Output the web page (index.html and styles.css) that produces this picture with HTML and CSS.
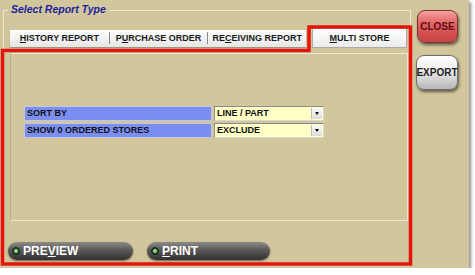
FILE: index.html
```html
<!DOCTYPE html>
<html lang="en">
<head>
    <meta charset="UTF-8">
    <title>Select Report Type</title>
    <link rel="stylesheet" href="styles.css">
</head>
<body>
    <div class="window">
        <div class="main">
            <div class="legend">Select Report Type</div>

            <div class="tabs">
                <div class="tabstrip">
                    <span class="tab"><u>H</u>ISTORY REPORT</span>
                    <span class="tab sep">P<u>U</u>RCHASE ORDER</span>
                    <span class="tab sep">RE<u>C</u>EIVING REPORT</span>
                </div>
                <div class="tab-active"><u>M</u>ULTI STORE</div>
            </div>

            <div class="panel">
                <div class="row">
                    <div class="label">SORT BY</div>
                    <div class="select">LINE / PART<span class="arrow"></span></div>
                </div>
                <div class="row">
                    <div class="label">SHOW 0 ORDERED STORES</div>
                    <div class="select">EXCLUDE<span class="arrow"></span></div>
                </div>
            </div>

            <div class="actions">
                <div class="pill preview"><span class="dot"></span>PRE<u>V</u>IEW</div>
                <div class="pill print"><span class="dot"></span><u>P</u>RINT</div>
            </div>
        </div>

        <div class="side">
            <div class="btn close">CLOSE</div>
            <div class="btn export">EXPORT</div>
        </div>

        <!-- annotation outline drawn over the window -->
        <svg class="mark" width="469" height="268" viewBox="0 0 469 268">
            <path d="M2.5 50.5 H309 V27 H410.5 V264 H2.5 Z" fill="none" stroke="#e3140d" stroke-width="3.5"/>
        </svg>
    </div>
</body>
</html>
```

FILE: styles.css
```css
body {
    margin: 0;
    background: #ffffff;
    font-family: "Liberation Sans", Arial, sans-serif;
}
u {
    text-decoration: underline;
    text-underline-offset: 1px;
}
.window {
    position: relative;
    width: 469px;
    height: 268px;
    background: #d2c69c;
    display: flex;
    box-shadow: 2px 2px 3px rgba(0,0,0,0.45);
}
.main {
    position: relative;
    box-sizing: border-box;
    width: 408px;
    height: 256px;
    margin: 10px 0 0 3px;
    padding: 17px 0 0 4px;
    border: 1px solid #ece6d2;
}
.legend {
    position: absolute;
    top: -9px;
    left: 4px;
    padding: 0 3px;
    background: #d2c69c;
    color: #1e1e9c;
    font-size: 10.5px;
    font-weight: bold;
    font-style: italic;
    line-height: 14px;
}
.tabs {
    display: flex;
    align-items: center;
    height: 20px;
    margin-left: 2px;
}
.tabstrip {
    display: flex;
    align-items: center;
    width: 296px;
    height: 17px;
    background: linear-gradient(#fefefe, #e6e6e6);
    box-shadow: 0 1px 1px #9c9478;
}
.tab {
    font-size: 9px;
    font-weight: bold;
    color: #1a1a1a;
    line-height: 12px;
    text-align: center;
    width: 99px;
}
.tab.sep {
    border-left: 1px solid #8a8a8a;
    width: 98px;
}
.tab-active {
    box-sizing: border-box;
    width: 95px;
    height: 20px;
    margin-left: 6px;
    background: linear-gradient(#ffffff, #ebebeb);
    border: 1px solid #aaaaaa;
    font-size: 9px;
    font-weight: bold;
    color: #1a1a1a;
    line-height: 18px;
    text-align: center;
}
.panel {
    box-sizing: border-box;
    height: 168px;
    margin: 5px 2px 0 2px;
    padding: 52px 0 0 13px;
    border: 1px solid #ece6d2;
    border-left-color: #b9ae88;
    display: flex;
    flex-direction: column;
    gap: 2px;
}
.row {
    display: flex;
    gap: 2px;
    height: 15px;
}
.label {
    box-sizing: border-box;
    width: 188px;
    background: #7b8ef2;
    border: 1px solid #c4c6dc;
    padding-left: 2px;
    font-size: 9px;
    font-weight: bold;
    line-height: 13px;
    color: #111111;
}
.select {
    position: relative;
    box-sizing: border-box;
    width: 110px;
    background: #ffffc6;
    border: 1px solid #8c8c8c;
    border-right-color: #d8d8d8;
    border-bottom-color: #d8d8d8;
    padding-left: 2px;
    font-size: 9px;
    font-weight: bold;
    line-height: 13px;
    color: #111111;
}
.arrow {
    position: absolute;
    top: 1px;
    right: 1px;
    width: 10px;
    height: 11px;
    background: linear-gradient(#fafafa, #dcdcdc);
    border-left: 1px solid #bdbdbd;
}
.arrow::after {
    content: "";
    position: absolute;
    left: 3px;
    top: 4px;
    border-left: 2px solid transparent;
    border-right: 2px solid transparent;
    border-top: 3px solid #000000;
}
.actions {
    display: flex;
    gap: 14px;
    margin-top: 21px;
}
.pill {
    box-sizing: border-box;
    height: 18px;
    border-radius: 9px;
    background: linear-gradient(#8e8c8a, #5a5856 45%, #333130);
    box-shadow: 0 1px 2px rgba(0,0,0,0.5);
    display: flex;
    align-items: center;
    padding-left: 4px;
    color: #ffffff;
    font-size: 12px;
    font-weight: bold;
    line-height: 14px;
}
.preview { width: 125px; }
.print { width: 123px; }
.dot {
    box-sizing: border-box;
    width: 8px;
    height: 8px;
    margin-right: 3px;
    border-radius: 50%;
    background: radial-gradient(circle, #8fd08a 0 35%, #1d4a22 55%);
    border: 1px solid #0f2a12;
}
.side {
    display: flex;
    flex-direction: column;
    gap: 12px;
    padding: 10px 0 0 5px;
}
.btn {
    box-sizing: border-box;
    width: 42px;
    display: flex;
    align-items: center;
    justify-content: center;
    border-radius: 8px;
    font-size: 10px;
    font-weight: bold;
    box-shadow: 1px 2px 3px rgba(0,0,0,0.55);
}
.close {
    height: 33px;
    margin-left: 1px;
    width: 41px;
    background: linear-gradient(#f4a0a0, #e46464 40%, #d65050 70%, #c64646);
    border: 1px solid #7e3232;
    color: #5a0f14;
}
.export {
    height: 35px;
    background: linear-gradient(#ffffff, #eeeeee 40%, #cfcfcf 75%, #b6b6b6);
    border: 1px solid #6e6e6e;
    color: #222222;
}
.mark {
    position: absolute;
    top: 0;
    left: 0;
    pointer-events: none;
}
```
